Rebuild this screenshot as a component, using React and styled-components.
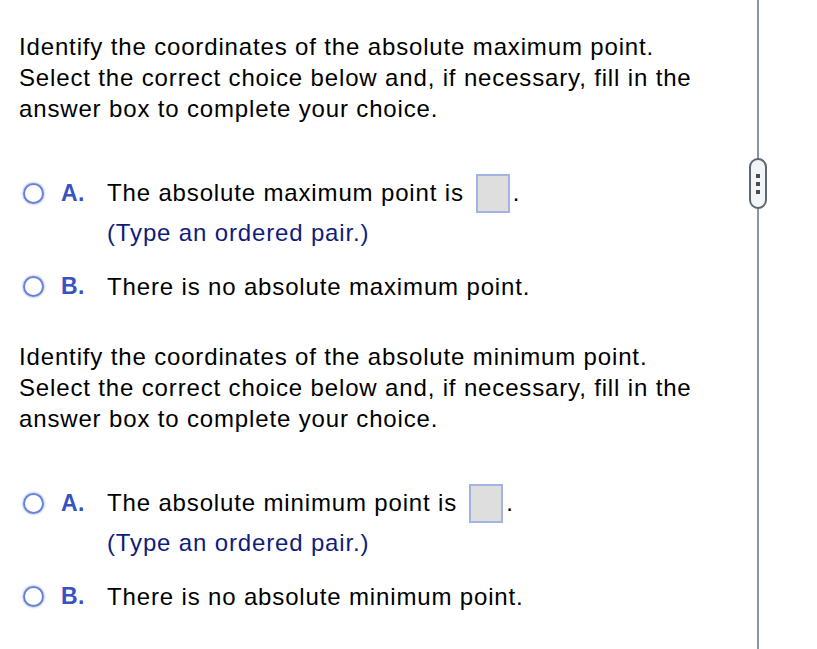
import React from 'react'
import styled, { createGlobalStyle } from "styled-components";

const GlobalStyle = createGlobalStyle`
  html, body {
    margin: 0;
    padding: 0;
    background: #ffffff;
  }
  body {
    font-family: "Liberation Sans", Arial, sans-serif;
    color: #000;
  }
`;

const Page = styled.div`
  display: flex;
  min-height: 100vh;
  width: 100%;
`;

const Main = styled.div`
  width: 757px;
  flex: none;
  padding: 31px 0 0 19px;
  box-sizing: border-box;
`;

const Divider = styled.div`
  position: relative;
  width: 2px;
  flex: none;
  background: #8b95a4;
`;

const Handle = styled.div`
  position: absolute;
  top: 158px;
  left: -8px;
  width: 14px;
  height: 47px;
  border: 2px solid #5d6772;
  border-radius: 9px;
  background: #f3f4f6;
  display: flex;
  flex-direction: column;
  align-items: center;
  justify-content: center;
  gap: 4px;
`;

const Dot = styled.span`
  width: 4px;
  height: 4px;
  background: #474b52;
`;

const Side = styled.div`
  flex: 1;
  background: #ffffff;
`;

const Section = styled.section`
  margin-bottom: ${p => p.$last ? "0" : "39px"};
`;

const Question = styled.p`
  margin: 0 0 49px;
  font-size: 24px;
  line-height: 31px;
  letter-spacing: 0.85px;
`;

const Option = styled.div`
  display: flex;
  align-items: center;
  height: ${p => p.$tall ? "40px" : "31px"};
  margin-top: ${p => p.$gap || "0"};
`;

const Radio = styled.span`
  width: 17px;
  height: 17px;
  flex: none;
  margin-left: 4px;
  border: 2px solid #6683d6;
  border-radius: 50%;
  box-shadow: 0 0 2px 0.5px rgba(102, 131, 214, 0.55);
`;

const Letter = styled.span`
  width: 46px;
  margin-left: 17px;
  font-size: 23px;
  font-weight: bold;
  color: #3852c2;
  letter-spacing: 0.5px;
`;

const Text = styled.span`
  font-size: 24px;
  letter-spacing: 0.85px;
  display: flex;
  align-items: center;
`;

const AnswerBox = styled.span`
  display: inline-block;
  width: 30px;
  height: 35px;
  margin: 0 3px 0 12px;
  border: 2px solid #a2b4e4;
  background: #dedede;
`;

const Hint = styled.div`
  margin: 4px 0 0 88px;
  font-size: 24px;
  line-height: 31px;
  letter-spacing: 0.85px;
  color: #0f1c7c;
`;

const questions = [
  {
    q: "Identify the coordinates of the absolute maximum point.",
    a: "The absolute maximum point is",
    b: "There is no absolute maximum point.",
  },
  {
    q: "Identify the coordinates of the absolute minimum point.",
    a: "The absolute minimum point is",
    b: "There is no absolute minimum point.",
  },
];

export default function App() {
  return (
    <>
      <GlobalStyle />
      <Page>
        <Main>
          {questions.map((item, i) => (
            <Section key={i} $last={i === questions.length - 1}>
              <Question>
                {item.q}
                <br />
                Select the correct choice below and, if necessary, fill in the
                <br />
                answer box to complete your choice.
              </Question>
              <Option $tall>
                <Radio />
                <Letter>A.</Letter>
                <Text>
                  {item.a}
                  <AnswerBox />.
                </Text>
              </Option>
              <Hint>(Type an ordered pair.)</Hint>
              <Option $gap="23px">
                <Radio />
                <Letter>B.</Letter>
                <Text>{item.b}</Text>
              </Option>
            </Section>
          ))}
        </Main>
        <Divider>
          <Handle>
            <Dot />
            <Dot />
            <Dot />
          </Handle>
        </Divider>
        <Side />
      </Page>
    </>
  )
}
